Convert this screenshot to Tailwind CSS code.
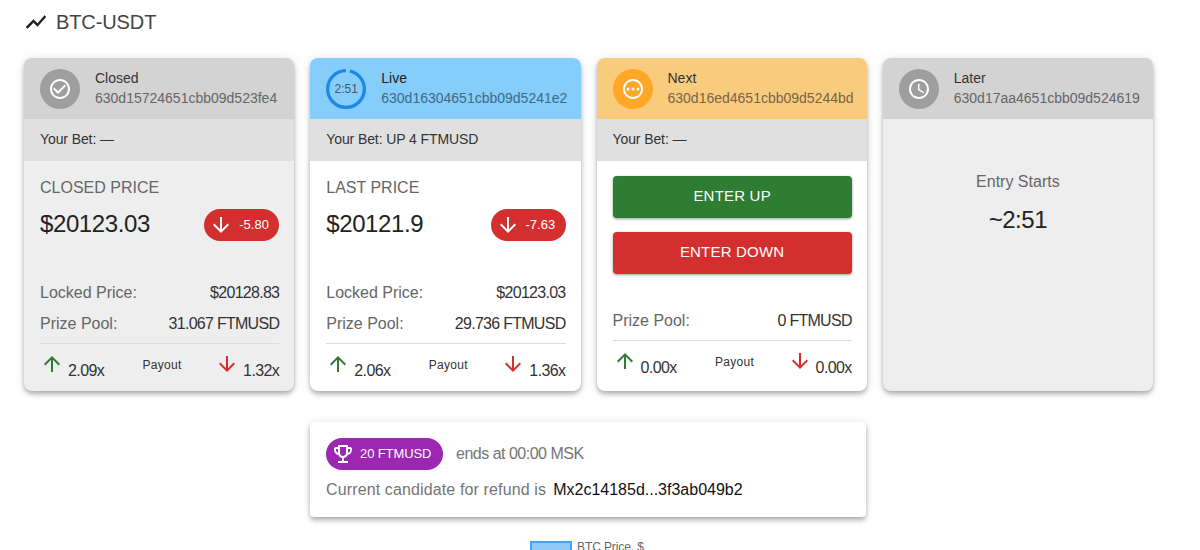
<!DOCTYPE html>
<html lang="en">
<head>
  <meta charset="UTF-8" />
  <title>BTC-USDT</title>
  <script src="https://cdn.jsdelivr.net/npm/@tailwindcss/browser@4"></script>
</head>
<body class="bg-white text-black/87 font-['Liberation_Sans',sans-serif] h-[550px] overflow-hidden">
  <!-- title -->
  <div class="flex items-center h-[44px] pl-[24px] gap-[8px]">
    <svg class="w-[24px] h-[24px] text-[#222]" viewBox="0 0 24 24" fill="currentColor"><path d="M3.5 18.49l6-6.01 4 4L22 6.92l-1.41-1.41-7.09 7.97-4-4L2 16.99z" stroke="currentColor" stroke-width="0.5"/></svg>
    <span class="text-[20px] leading-none text-[#444] tracking-[-0.1px]">BTC-USDT</span>
  </div>

  <!-- rounds -->
  <div class="flex gap-[16px] pl-[24px] pr-[47px] pt-[14px]">
    <!-- closed -->
    <div class="flex-1 h-[333px] bg-[#eeeeee] rounded-[8px] overflow-hidden shadow-[0_2px_4px_-1px_rgba(0,0,0,0.2),0_4px_5px_0_rgba(0,0,0,0.14),0_1px_10px_0_rgba(0,0,0,0.12)] flex flex-col">
      <div class="h-[61px] bg-[#d3d3d3] flex items-center pl-[16px] gap-[15px]">
        <div class="w-[40px] h-[40px] rounded-full bg-[#9e9e9e] flex items-center justify-center">
          <svg class="w-[24px] h-[24px] text-white" viewBox="0 0 24 24" fill="currentColor"><path d="M16.59 7.58 10 14.17l-3.59-3.58L5 12l5 5 8-8zM12 2C6.48 2 2 6.48 2 12s4.48 10 10 10 10-4.48 10-10S17.52 2 12 2zm0 18c-4.42 0-8-3.58-8-8s3.58-8 8-8 8 3.58 8 8-3.58 8-8 8z"/></svg>
        </div>
        <div class="-mt-[2px]">
          <div class="text-[14px] leading-[20px] text-[#333]">Closed</div>
          <div class="text-[14px] leading-[20px] text-[#666] whitespace-nowrap">630d15724651cbb09d523fe4</div>
        </div>
      </div>
      <div class="h-[42px] bg-[#e0e0e0] flex items-center pl-[16px] pb-[2px] text-[14px] text-[#333] tracking-[-0.1px]">Your Bet: —</div>
      <div class="flex-1 flex flex-col pl-[16px] pr-[15px]">
        <div class="text-[16px] leading-[24px] text-[#666] mt-[15px]">CLOSED PRICE</div>
        <div class="flex items-center justify-between mt-[6px]">
          <span class="text-[24px] leading-[32px] text-[#222] tracking-[-0.4px]">$20123.03</span>
          <span class="h-[32px] w-[75px] mt-[3px] rounded-full bg-[#d32f2f] text-white flex items-center pl-[5px] gap-[6px] text-[13px]">
            <svg class="w-[24px] h-[24px]" viewBox="0 0 24 24" fill="currentColor"><path d="m20 12-1.41-1.41L13 16.17V4h-2v12.17l-5.58-5.59L4 12l8 8 8-8z"/></svg>-5.80
          </span>
        </div>
        <div class="flex justify-between text-[16px] leading-[24px] mt-[40px]"><span class="text-[#666]">Locked Price:</span><span class="text-[#333] tracking-[-0.72px]">$20128.83</span></div>
        <div class="flex justify-between text-[16px] leading-[24px] mt-[7px]"><span class="text-[#666]">Prize Pool:</span><span class="text-[#333] tracking-[-0.72px]">31.067 FTMUSD</span></div>
        <div class="flex justify-between items-start border-t border-[#ddd] mt-[7px] pt-[8px]">
          <div class="flex items-end"><svg class="w-[24px] h-[24px] text-[#2e7d32]" viewBox="0 0 24 24" fill="currentColor"><path d="m4 12 1.41 1.41L11 7.83V20h2V7.83l5.58 5.59L20 12l-8-8-8 8z"/></svg><span class="text-[16px] leading-[20px] text-[#333] ml-[4px] -mb-[5px] tracking-[-0.6px]">2.09x</span></div>
          <span class="text-[12px] leading-[20px] text-[#333] tracking-[0.3px] mt-[3px] ml-[5px]">Payout</span>
          <div class="flex items-end"><svg class="w-[24px] h-[24px] text-[#d32f2f]" viewBox="0 0 24 24" fill="currentColor"><path d="m20 12-1.41-1.41L13 16.17V4h-2v12.17l-5.58-5.59L4 12l8 8 8-8z"/></svg><span class="text-[16px] leading-[20px] text-[#333] ml-[4px] -mb-[5px] tracking-[-0.6px]">1.32x</span></div>
        </div>
      </div>
    </div>

    <!-- live -->
    <div class="flex-1 h-[333px] bg-white rounded-[8px] overflow-hidden shadow-[0_2px_4px_-1px_rgba(0,0,0,0.2),0_4px_5px_0_rgba(0,0,0,0.14),0_1px_10px_0_rgba(0,0,0,0.12)] flex flex-col">
      <div class="h-[61px] bg-[#85cdfb] flex items-center pl-[16px] gap-[15px]">
        <div class="relative w-[40px] h-[40px]">
          <svg class="w-[40px] h-[40px] -rotate-90" viewBox="0 0 40 40" fill="none"><circle cx="20" cy="20" r="18.36" stroke="#1e88e5" stroke-width="3.27" stroke-dasharray="110.5 4.9" stroke-dashoffset="-4"/></svg>
          <span class="absolute inset-0 flex items-center justify-center text-[12px] text-[#455a64]">2:51</span>
        </div>
        <div class="-mt-[2px]">
          <div class="text-[14px] leading-[20px] text-[#222]">Live</div>
          <div class="text-[14px] leading-[20px] text-[#3f6a85] whitespace-nowrap">630d16304651cbb09d5241e2</div>
        </div>
      </div>
      <div class="h-[42px] bg-[#e0e0e0] flex items-center pl-[16px] pb-[2px] text-[14px] text-[#333] tracking-[-0.1px]">Your Bet: UP 4 FTMUSD</div>
      <div class="flex-1 flex flex-col pl-[16px] pr-[15px]">
        <div class="text-[16px] leading-[24px] text-[#666] mt-[15px]">LAST PRICE</div>
        <div class="flex items-center justify-between mt-[6px]">
          <span class="text-[24px] leading-[32px] text-[#222] tracking-[-0.4px]">$20121.9</span>
          <span class="h-[32px] w-[75px] mt-[3px] rounded-full bg-[#d32f2f] text-white flex items-center pl-[5px] gap-[6px] text-[13px]">
            <svg class="w-[24px] h-[24px]" viewBox="0 0 24 24" fill="currentColor"><path d="m20 12-1.41-1.41L13 16.17V4h-2v12.17l-5.58-5.59L4 12l8 8 8-8z"/></svg>-7.63
          </span>
        </div>
        <div class="flex justify-between text-[16px] leading-[24px] mt-[40px]"><span class="text-[#666]">Locked Price:</span><span class="text-[#333] tracking-[-0.72px]">$20123.03</span></div>
        <div class="flex justify-between text-[16px] leading-[24px] mt-[7px]"><span class="text-[#666]">Prize Pool:</span><span class="text-[#333] tracking-[-0.72px]">29.736 FTMUSD</span></div>
        <div class="flex justify-between items-start border-t border-[#ddd] mt-[7px] pt-[8px]">
          <div class="flex items-end"><svg class="w-[24px] h-[24px] text-[#2e7d32]" viewBox="0 0 24 24" fill="currentColor"><path d="m4 12 1.41 1.41L11 7.83V20h2V7.83l5.58 5.59L20 12l-8-8-8 8z"/></svg><span class="text-[16px] leading-[20px] text-[#333] ml-[4px] -mb-[5px] tracking-[-0.6px]">2.06x</span></div>
          <span class="text-[12px] leading-[20px] text-[#333] tracking-[0.3px] mt-[3px] ml-[5px]">Payout</span>
          <div class="flex items-end"><svg class="w-[24px] h-[24px] text-[#d32f2f]" viewBox="0 0 24 24" fill="currentColor"><path d="m20 12-1.41-1.41L13 16.17V4h-2v12.17l-5.58-5.59L4 12l8 8 8-8z"/></svg><span class="text-[16px] leading-[20px] text-[#333] ml-[4px] -mb-[5px] tracking-[-0.6px]">1.36x</span></div>
        </div>
      </div>
    </div>

    <!-- next -->
    <div class="flex-1 h-[333px] bg-white rounded-[8px] overflow-hidden shadow-[0_2px_4px_-1px_rgba(0,0,0,0.2),0_4px_5px_0_rgba(0,0,0,0.14),0_1px_10px_0_rgba(0,0,0,0.12)] flex flex-col">
      <div class="h-[61px] bg-[#f9cb7d] flex items-center pl-[16px] gap-[15px]">
        <div class="w-[40px] h-[40px] rounded-full bg-[#ffa726] flex items-center justify-center">
          <svg class="w-[24px] h-[24px] text-white" viewBox="0 0 24 24" fill="currentColor"><path d="M12 2C6.48 2 2 6.48 2 12s4.48 10 10 10 10-4.48 10-10S17.52 2 12 2zm0 18c-4.42 0-8-3.58-8-8s3.58-8 8-8 8 3.58 8 8-3.58 8-8 8z"/><circle cx="7" cy="12" r="1.5"/><circle cx="12" cy="12" r="1.5"/><circle cx="17" cy="12" r="1.5"/></svg>
        </div>
        <div class="-mt-[2px]">
          <div class="text-[14px] leading-[20px] text-[#333]">Next</div>
          <div class="text-[14px] leading-[20px] text-[#77654a] whitespace-nowrap">630d16ed4651cbb09d5244bd</div>
        </div>
      </div>
      <div class="h-[42px] bg-[#e0e0e0] flex items-center pl-[16px] pb-[2px] text-[14px] text-[#333] tracking-[-0.1px]">Your Bet: —</div>
      <div class="flex-1 flex flex-col pl-[16px] pr-[15px]">
        <button class="mt-[15px] h-[42px] pb-[2px] rounded-[4px] bg-[#2e7d32] text-white text-[15px] tracking-[0.2px] shadow-[0_1px_3px_rgba(0,0,0,0.4)]">ENTER UP</button>
        <button class="mt-[14px] h-[42px] pb-[2px] rounded-[4px] bg-[#d32f2f] text-white text-[15px] tracking-[0.2px] shadow-[0_1px_3px_rgba(0,0,0,0.4)]">ENTER DOWN</button>
        <div class="flex justify-between text-[16px] leading-[24px] mt-[35px]"><span class="text-[#666]">Prize Pool:</span><span class="text-[#333] tracking-[-0.72px]">0 FTMUSD</span></div>
        <div class="flex justify-between items-start border-t border-[#ddd] mt-[7px] pt-[8px]">
          <div class="flex items-end"><svg class="w-[24px] h-[24px] text-[#2e7d32]" viewBox="0 0 24 24" fill="currentColor"><path d="m4 12 1.41 1.41L11 7.83V20h2V7.83l5.58 5.59L20 12l-8-8-8 8z"/></svg><span class="text-[16px] leading-[20px] text-[#333] ml-[4px] -mb-[5px] tracking-[-0.6px]">0.00x</span></div>
          <span class="text-[12px] leading-[20px] text-[#333] tracking-[0.3px] mt-[3px] ml-[5px]">Payout</span>
          <div class="flex items-end"><svg class="w-[24px] h-[24px] text-[#d32f2f]" viewBox="0 0 24 24" fill="currentColor"><path d="m20 12-1.41-1.41L13 16.17V4h-2v12.17l-5.58-5.59L4 12l8 8 8-8z"/></svg><span class="text-[16px] leading-[20px] text-[#333] ml-[4px] -mb-[5px] tracking-[-0.6px]">0.00x</span></div>
        </div>
      </div>
    </div>

    <!-- later -->
    <div class="flex-1 h-[333px] bg-[#eeeeee] rounded-[8px] overflow-hidden shadow-[0_2px_4px_-1px_rgba(0,0,0,0.2),0_4px_5px_0_rgba(0,0,0,0.14),0_1px_10px_0_rgba(0,0,0,0.12)] flex flex-col">
      <div class="h-[61px] bg-[#d3d3d3] flex items-center pl-[16px] gap-[15px]">
        <div class="w-[40px] h-[40px] rounded-full bg-[#9e9e9e] flex items-center justify-center">
          <svg class="w-[24px] h-[24px] text-white" viewBox="0 0 24 24" fill="currentColor"><path d="M11.99 2C6.47 2 2 6.48 2 12s4.47 10 9.99 10C17.52 22 22 17.52 22 12S17.52 2 11.99 2zM12 20c-4.42 0-8-3.58-8-8s3.58-8 8-8 8 3.58 8 8-3.58 8-8 8zm.5-13H11v6l5.25 3.15.75-1.23-4.5-2.67z"/></svg>
        </div>
        <div class="-mt-[2px]">
          <div class="text-[14px] leading-[20px] text-[#333]">Later</div>
          <div class="text-[14px] leading-[20px] text-[#666] whitespace-nowrap">630d17aa4651cbb09d524619</div>
        </div>
      </div>
      <div class="flex-1 flex flex-col items-center pt-[51px]">
        <div class="text-[16px] leading-[24px] text-[#666]">Entry Starts</div>
        <div class="text-[24px] leading-[32px] text-[#222] mt-[10px] tracking-[-0.5px]">~2:51</div>
      </div>
    </div>
  </div>

  <!-- refund -->
  <div class="ml-[310px] mt-[31px] w-[556px] h-[95px] bg-white rounded-[4px] shadow-[0_2px_4px_-1px_rgba(0,0,0,0.2),0_4px_5px_0_rgba(0,0,0,0.14),0_1px_10px_0_rgba(0,0,0,0.12)] px-[16px] pt-[16px]">
    <div class="flex items-center gap-[13px]">
      <span class="h-[32px] w-[117px] rounded-full bg-[#9c27b0] text-white flex items-center pl-[5px] gap-[5px] text-[13px] tracking-[-0.1px] whitespace-nowrap">
        <svg class="w-[24px] h-[24px]" viewBox="0 0 24 24" fill="currentColor"><path d="M19 5h-2V3H7v2H5c-1.1 0-2 .9-2 2v1c0 2.55 1.92 4.63 4.39 4.94.63 1.5 1.98 2.63 3.61 2.96V19H7v2h10v-2h-4v-3.1c1.63-.33 2.98-1.46 3.61-2.96C19.08 12.63 21 10.55 21 8V7c0-1.1-.9-2-2-2zM5 8V7h2v3.82C5.84 10.4 5 9.3 5 8zm7 6c-1.65 0-3-1.35-3-3V5h6v6c0 1.65-1.35 3-3 3zm7-6c0 1.3-.84 2.4-2 2.82V7h2v1z"/></svg>20 FTMUSD
      </span>
      <span class="text-[16px] text-[#757575] tracking-[-0.5px]">ends at 00:00 MSK</span>
    </div>
    <div class="flex items-center gap-[8px] mt-[8px] text-[16px] leading-[24px] whitespace-nowrap">
      <span class="text-[#757575] tracking-[0.13px]">Current candidate for refund is</span><span class="text-[#111] -ml-[1px]">Mx2c14185d...3f3ab049b2</span>
    </div>
  </div>

  <!-- chart legend, cut off by the window -->
  <div class="flex items-start mt-[24px] pl-[530px] gap-[5px]">
    <span class="w-[42px] h-[12px] bg-[#90caf9] border-[2px] border-[#42a5f5]"></span>
    <span class="text-[12px] leading-[13px] text-[#666] -tracking-[0.1px]">BTC Price, $</span>
  </div>
</body>
</html>
